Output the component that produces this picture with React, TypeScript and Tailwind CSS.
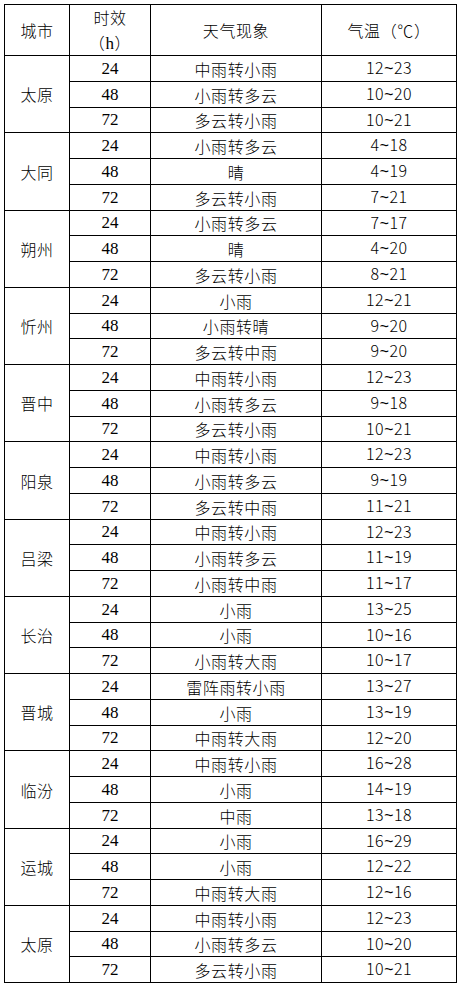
import React from "react";

type Row = [string, string, string];
type City = { name: string; rows: Row[] };

const data: City[] = [
  { name: "太原", rows: [["24", "中雨转小雨", "12~23"], ["48", "小雨转多云", "10~20"], ["72", "多云转小雨", "10~21"]] },
  { name: "大同", rows: [["24", "小雨转多云", "4~18"], ["48", "晴", "4~19"], ["72", "多云转小雨", "7~21"]] },
  { name: "朔州", rows: [["24", "小雨转多云", "7~17"], ["48", "晴", "4~20"], ["72", "多云转小雨", "8~21"]] },
  { name: "忻州", rows: [["24", "小雨", "12~21"], ["48", "小雨转晴", "9~20"], ["72", "多云转中雨", "9~20"]] },
  { name: "晋中", rows: [["24", "中雨转小雨", "12~23"], ["48", "小雨转多云", "9~18"], ["72", "多云转小雨", "10~21"]] },
  { name: "阳泉", rows: [["24", "中雨转小雨", "12~23"], ["48", "小雨转多云", "9~19"], ["72", "多云转中雨", "11~21"]] },
  { name: "吕梁", rows: [["24", "中雨转小雨", "12~23"], ["48", "小雨转多云", "11~19"], ["72", "小雨转中雨", "11~17"]] },
  { name: "长治", rows: [["24", "小雨", "13~25"], ["48", "小雨", "10~16"], ["72", "小雨转大雨", "10~17"]] },
  { name: "晋城", rows: [["24", "雷阵雨转小雨", "13~27"], ["48", "小雨", "13~19"], ["72", "中雨转大雨", "12~20"]] },
  { name: "临汾", rows: [["24", "中雨转小雨", "16~28"], ["48", "小雨", "14~19"], ["72", "中雨", "13~18"]] },
  { name: "运城", rows: [["24", "小雨", "16~29"], ["48", "小雨", "12~22"], ["72", "中雨转大雨", "12~16"]] },
  { name: "太原", rows: [["24", "中雨转小雨", "12~23"], ["48", "小雨转多云", "10~20"], ["72", "多云转小雨", "10~21"]] },
];

const PITCH = 25.75;
const rowHeight = (k: number) => Math.round(55 + (k + 1) * PITCH) - Math.round(55 + k * PITCH);

function Temp({ v }: { v: string }) {
  const [a, b] = v.split("~");
  return (
    <span className="tracking-[0.4px]">
      {a}
      <span className="font-[family-name:Liberation_Mono,monospace] font-normal">~</span>
      {b}
    </span>
  );
}

export default function App() {
  let k = 0;
  return (
    <div className="bg-white w-[460px] h-[986px] pt-[4px] pl-[4px] text-black">
      <div className="w-[453px] border-l border-t border-black font-[family-name:Noto_Sans_CJK_SC,sans-serif] font-light text-[16px] tracking-[0.6px]">
        <div className="flex h-[51px]">
          <div className="w-[65px] border-r border-b border-black flex items-center justify-center">城市</div>
          <div className="w-[81px] border-r border-b border-black flex flex-col items-center justify-center leading-[25px]">
            <span>时效</span>
            <span>
              （<span className="font-[family-name:Liberation_Serif,serif] font-normal text-[17px]">h</span>）
            </span>
          </div>
          <div className="w-[171px] border-r border-b border-black flex items-center justify-center">天气现象</div>
          <div className="w-[135px] border-r border-b border-black flex items-center justify-center">气温（℃）</div>
        </div>
        {data.map((city, ci) => (
          <div key={ci} className="flex">
            <div className="w-[65px] border-r border-b border-black flex items-center justify-center">{city.name}</div>
            <div className="flex flex-col">
              {city.rows.map((r, ri) => {
                const h = rowHeight(k++);
                return (
                  <div key={ri} className="flex" style={{ height: h }}>
                    <div className="w-[81px] border-r border-b border-black flex items-center justify-center font-[family-name:Liberation_Serif,serif] font-normal tracking-normal text-[17px]">
                      {r[0]}
                    </div>
                    <div className="w-[171px] border-r border-b border-black flex items-center justify-center">{r[1]}</div>
                    <div className="w-[135px] border-r border-b border-black flex items-center justify-center">
                      <Temp v={r[2]} />
                    </div>
                  </div>
                );
              })}
            </div>
          </div>
        ))}
      </div>
    </div>
  );
}
